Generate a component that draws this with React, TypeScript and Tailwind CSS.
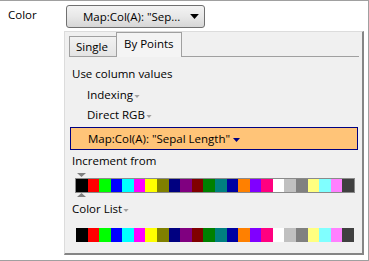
const SWATCHES = [
  '#000000', '#ff0000', '#00ff00', '#0000ff', '#00ffff', '#ff00ff', '#ffff00', '#808000',
  '#000080', '#800080', '#800000', '#008000', '#008080', '#0000a0', '#ff8000', '#8000ff',
  '#ff0080', '#ffffff', '#c0c0c0', '#808080', '#ffff80', '#80ffff', '#ff80ff', '#404040',
];

function Caret({ className }: { className: string }) {
  return (
    <svg width="7" height="4" viewBox="0 0 7 4" className={className}>
      <path d="M0 0h7L3.5 4z" fill="currentColor" />
    </svg>
  );
}

function Strip({ bordered }: { bordered?: boolean }) {
  return (
    <div className={bordered ? 'flex h-[15px] w-[280px] border border-[#8a8a8a]' : 'flex h-[14px] w-[278px]'}>
      {SWATCHES.map((c, i) => (
        <div key={i} className="h-full flex-1" style={{ backgroundColor: c }} />
      ))}
    </div>
  );
}

export default function App() {
  return (
    <div
      className="flex h-[261px] w-[369px] border-t border-r border-b border-[#a0a0a0] bg-white text-[11.5px] leading-[16px] text-black"
      style={{ fontFamily: '"Open Sans", "Liberation Sans", sans-serif' }}
    >
      <div className="w-[64px] shrink-0 pl-[8px] pt-[6px]">Color</div>

      <div className="flex flex-col">
        <button className="ml-[2px] mt-[4px] flex h-[23px] w-[139px] items-center rounded-[3px] border border-[#707070] bg-gradient-to-b from-[#f3f3f3] via-[#e8e8e8] to-[#d6d6d6] pl-[16px] pr-[5px]">
          <span className="flex-1 text-left">Map:Col(A): "Sep...</span>
          <Caret className="h-[5px] w-[9px] text-black" />
        </button>

        <div className="mt-[3px] flex h-[224px] w-[300px] flex-col border-t border-l border-r-2 border-b-2 border-t-[#dcdcdc] border-l-[#dcdcdc] border-r-[#858585] border-b-[#858585] bg-[#f0f0f0]">
          <div className="ml-[4px] mr-[3px] flex h-[25px] items-end border-b border-[#a0a0a0]">
            <div className="flex h-[20px] w-[47px] items-start border-t border-l border-[#a0a0a0] bg-gradient-to-b from-[#f2f2f2] to-[#e4e4e4] pl-[6px] pt-[2px]">
              Single
            </div>
            <div className="-mb-px flex h-[25px] w-[66px] items-start border-t border-l border-r border-[#a0a0a0] bg-[#f4f4f4] pl-[7px] pt-[3px]">
              By Points
            </div>
          </div>

          <div className="mt-[9px] pl-[7px]">Use column values</div>
          <div className="mt-[5px] flex items-center pl-[22px]">
            Indexing
            <Caret className="ml-[1px] mt-[3px] h-[3px] w-[6px] text-[#a0a0a0]" />
          </div>
          <div className="mt-[4px] flex items-center pl-[22px]">
            Direct RGB
            <Caret className="ml-[1px] mt-[3px] h-[3px] w-[6px] text-[#a0a0a0]" />
          </div>

          <div className="ml-[5px] mr-[4px] mt-[4px] flex h-[23px] items-center border border-[#000080] bg-[#ffc478] pl-[17px]">
            Map:Col(A): "Sepal Length"
            <Caret className="ml-[3px] mt-[3px] h-[4px] w-[7px] text-[#000080]" />
          </div>

          <div className="mt-[3px] pl-[7px]">Increment from</div>
          <div className="ml-[10px] mt-[4px] flex flex-col">
            <div className="ml-[2px] h-[4px]">
              <svg width="9" height="4" viewBox="0 0 9 4" className="text-[#808080]">
                <path d="M0 0h9L4.5 4z" fill="currentColor" />
              </svg>
            </div>
            <div className="mt-px">
              <Strip bordered />
            </div>
            <div className="ml-[2px] h-[4px]">
              <svg width="9" height="4" viewBox="0 0 9 4" className="text-[#808080]">
                <path d="M0 4h9L4.5 0z" fill="currentColor" />
              </svg>
            </div>
          </div>

          <div className="mt-[4px] flex items-center pl-[7px]">
            Color List
            <Caret className="ml-[1px] mt-[3px] h-[3px] w-[6px] text-[#a0a0a0]" />
          </div>
          <div className="ml-[11px] mt-[11px]">
            <Strip />
          </div>
        </div>
      </div>
    </div>
  );
}
